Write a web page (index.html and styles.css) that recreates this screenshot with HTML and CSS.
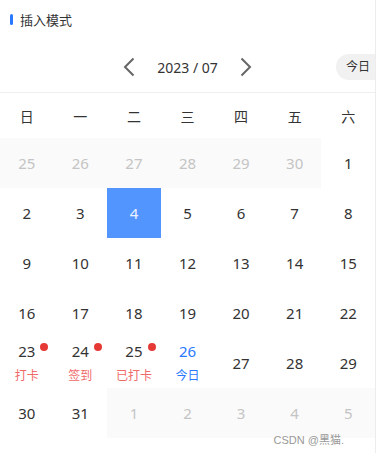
FILE: index.html
```html
<!DOCTYPE html>
<html lang="zh-CN">
<head>
    <meta charset="UTF-8">
    <meta name="viewport" content="width=device-width, initial-scale=1.0">
    <title>插入模式</title>
    <link rel="stylesheet" href="styles.css">
</head>
<body>
    <div class="page">
        <div class="title">
            <span class="title-bar"></span>
            <span>插入模式</span>
        </div>

        <div class="nav">
            <div class="nav-center">
                <svg class="arrow" width="12" height="20" viewBox="0 0 12 20"><path d="M10.5 1.5 L2 10 L10.5 18.5"/></svg>
                <span class="month">2023 / 07</span>
                <svg class="arrow" width="12" height="20" viewBox="0 0 12 20"><path d="M1.5 1.5 L10 10 L1.5 18.5"/></svg>
            </div>
            <span class="today-btn">今日</span>
        </div>

        <div class="week">
            <span>日</span><span>一</span><span>二</span><span>三</span><span>四</span><span>五</span><span>六</span>
        </div>

        <div class="days">
            <div class="day other"><span class="num">25</span></div>
            <div class="day other"><span class="num">26</span></div>
            <div class="day other"><span class="num">27</span></div>
            <div class="day other"><span class="num">28</span></div>
            <div class="day other"><span class="num">29</span></div>
            <div class="day other"><span class="num">30</span></div>
            <div class="day"><span class="num">1</span></div>

            <div class="day"><span class="num">2</span></div>
            <div class="day"><span class="num">3</span></div>
            <div class="day selected"><span class="num">4</span></div>
            <div class="day"><span class="num">5</span></div>
            <div class="day"><span class="num">6</span></div>
            <div class="day"><span class="num">7</span></div>
            <div class="day"><span class="num">8</span></div>

            <div class="day"><span class="num">9</span></div>
            <div class="day"><span class="num">10</span></div>
            <div class="day"><span class="num">11</span></div>
            <div class="day"><span class="num">12</span></div>
            <div class="day"><span class="num">13</span></div>
            <div class="day"><span class="num">14</span></div>
            <div class="day"><span class="num">15</span></div>

            <div class="day"><span class="num">16</span></div>
            <div class="day"><span class="num">17</span></div>
            <div class="day"><span class="num">18</span></div>
            <div class="day"><span class="num">19</span></div>
            <div class="day"><span class="num">20</span></div>
            <div class="day"><span class="num">21</span></div>
            <div class="day"><span class="num">22</span></div>

            <div class="day"><span class="num dot">23</span><span class="info">打卡</span></div>
            <div class="day"><span class="num dot">24</span><span class="info">签到</span></div>
            <div class="day"><span class="num dot">25</span><span class="info">已打卡</span></div>
            <div class="day today"><span class="num">26</span><span class="info">今日</span></div>
            <div class="day"><span class="num">27</span></div>
            <div class="day"><span class="num">28</span></div>
            <div class="day"><span class="num">29</span></div>

            <div class="day"><span class="num">30</span></div>
            <div class="day"><span class="num">31</span></div>
            <div class="day other"><span class="num">1</span></div>
            <div class="day other"><span class="num">2</span></div>
            <div class="day other"><span class="num">3</span></div>
            <div class="day other"><span class="num">4</span></div>
            <div class="day other"><span class="num">5</span></div>
        </div>

        <span class="watermark">CSDN @黑猫.</span>
    </div>
</body>
</html>
```

FILE: styles.css
```css
/* Global styles */
body {
    margin: 0;
    padding: 0;
    background-color: #fff;
    color: #333;
    font-family: 'Noto Sans', 'Noto Sans CJK SC', sans-serif;
}

.page {
    position: relative;
    width: 375px;
    height: 453px;
    border-right: 1px solid #ececec;
}

/* Title */
.title {
    height: 38px;
    display: flex;
    align-items: center;
    padding-left: 10px;
    font-size: 13px;
    color: #333;
}

.title-bar {
    width: 3px;
    height: 11px;
    border-radius: 2px;
    background-color: #2979ff;
    margin-right: 7px;
}

/* Month navigation */
.nav {
    height: 50px;
    margin-top: 4px;
    display: grid;
    grid-template-columns: 1fr auto 1fr;
    align-items: center;
    border-bottom: 1px solid #eee;
}

.nav-center {
    grid-column: 2;
    display: flex;
    align-items: center;
    gap: 22px;
}

.arrow path {
    fill: none;
    stroke: #666;
    stroke-width: 2;
}

.month {
    font-size: 14px;
    color: #333;
}

.today-btn {
    justify-self: end;
    width: 29px;
    height: 26px;
    line-height: 26px;
    padding-left: 10px;
    border-radius: 13px 0 0 13px;
    background-color: #f1f1f1;
    font-size: 12px;
    color: #333;
}

/* Week header */
.week {
    display: grid;
    grid-template-columns: repeat(7, 1fr);
    height: 45px;
    align-items: center;
    text-align: center;
    font-size: 14px;
    color: #333;
}

/* Days */
.days {
    display: grid;
    grid-template-columns: repeat(7, 1fr);
    grid-auto-rows: 50px;
}

.day {
    display: flex;
    flex-direction: column;
    align-items: center;
    justify-content: center;
    font-size: 15px;
    color: #333;
}

.day .num {
    position: relative;
    line-height: 18px;
}

.day .num.dot::after {
    content: '';
    position: absolute;
    top: 1px;
    right: -13px;
    width: 8px;
    height: 8px;
    border-radius: 50%;
    background-color: #e53935;
}

.day .info {
    margin-top: 8px;
    line-height: 16px;
    font-size: 12px;
    color: #f06a6a;
}

.day.other {
    background-color: #fafafa;
    color: #c4c4c4;
}

.day.selected {
    background-color: #5395ff;
    color: #eaf2ff;
}

.day.today,
.day.today .info {
    color: #2979ff;
}

.watermark {
    position: absolute;
    right: 31px;
    top: 431px;
    font-family: 'Liberation Sans', 'Noto Sans CJK SC', sans-serif;
    font-size: 11px;
    color: #999;
}
```
